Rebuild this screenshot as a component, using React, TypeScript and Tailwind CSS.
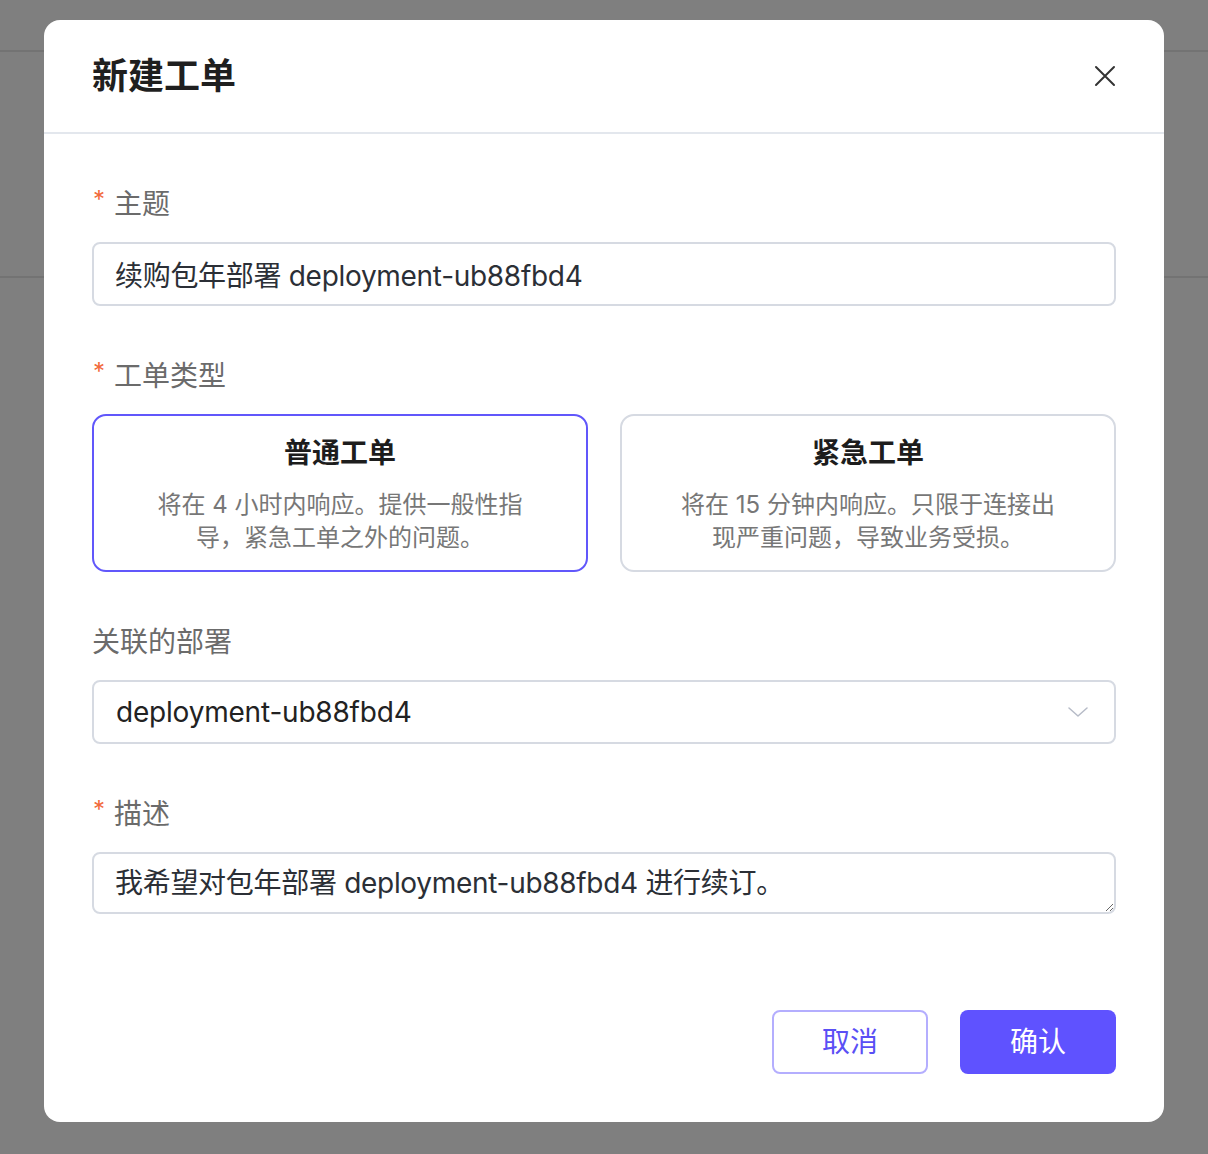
import { useState } from "react";

const font = {
  fontFamily: '"Inter", "Noto Sans CJK SC", sans-serif',
};

function Label({ text, required }: { text: string; required?: boolean }) {
  return (
    <div className="flex items-center h-10 text-[28px] leading-10 text-[#6b6b6b]">
      {required && (
        <span className="w-[22px] text-[24px] text-[#f26a3b] -mt-2 pl-[1px]">*</span>
      )}
      <span>{text}</span>
    </div>
  );
}

const ticketTypes = [
  {
    key: "normal",
    title: "普通工单",
    desc: ["将在 4 小时内响应。提供一般性指", "导，紧急工单之外的问题。"],
  },
  {
    key: "urgent",
    title: "紧急工单",
    desc: ["将在 15 分钟内响应。只限于连接出", "现严重问题，导致业务受损。"],
  },
];

export default function App() {
  const [type, setType] = useState("normal");

  return (
    <div className="relative h-[1154px] bg-[#7f7f7f] overflow-hidden" style={font}>
      <div className="h-[52px] border-b-2 border-[#737373]" />
      <div className="h-[226px] border-b-2 border-[#737373]" />

      <div className="absolute left-[44px] top-[20px] w-[1120px] h-[1102px] rounded-2xl bg-white">
        <div className="h-[114px] flex items-center justify-between px-12 border-b-2 border-[#e3e7ed]">
          <h1 className="text-[36px] font-bold text-[#1f1f1f]">新建工单</h1>
          <button className="w-[22px] h-[22px] text-[#333]">
            <svg viewBox="0 0 22 22" width="22" height="22" fill="none" stroke="currentColor" strokeWidth="2" strokeLinecap="round">
              <path d="M2 2 L20 20 M20 2 L2 20" />
            </svg>
          </button>
        </div>

        <div className="px-12 pt-[50px]">
          <Label text="主题" required />
          <input
            className="mt-[18px] w-full h-16 rounded-lg border-2 border-[#d6dae2] px-[21px] text-[28px] tracking-[-0.3px] text-[#2b2f36] outline-none"
            defaultValue="续购包年部署 deployment-ub88fbd4"
          />

          <div className="mt-[50px]">
            <Label text="工单类型" required />
          </div>
          <div className="mt-[18px] grid grid-cols-2 gap-8">
            {ticketTypes.map((t) => (
              <button
                key={t.key}
                onClick={() => setType(t.key)}
                className={
                  "h-[158px] rounded-[14px] border-2 flex flex-col items-center pt-[19px] " +
                  (type === t.key ? "border-[#6157fb]" : "border-[#d6dae2]")
                }
              >
                <div className="text-[28px] leading-9 font-bold text-[#1d1d1d]">{t.title}</div>
                <div className="mt-[17px] text-[24px] leading-[33px] text-[#777]">
                  {t.desc.map((d) => (
                    <div key={d}>{d}</div>
                  ))}
                </div>
              </button>
            ))}
          </div>

          <div className="mt-[50px]">
            <Label text="关联的部署" />
          </div>
          <div className="mt-[18px] h-16 rounded-lg border-2 border-[#d6dae2] flex items-center justify-between pl-[22px] pr-[26px]">
            <span className="text-[28px] tracking-[-0.2px] text-[#222]">deployment-ub88fbd4</span>
            <svg viewBox="0 0 20 10" width="20" height="10" fill="none" stroke="#b6bbc7" strokeWidth="1.5" strokeLinecap="round" strokeLinejoin="round">
              <path d="M1 1 L10 9 L19 1" />
            </svg>
          </div>

          <div className="mt-[50px]">
            <Label text="描述" required />
          </div>
          <textarea
            className="mt-[18px] block w-full h-[62px] rounded-lg border-2 border-[#d6dae2] px-[21px] pt-[9px] text-[28px] tracking-[-0.3px] leading-10 text-[#2b2f36] outline-none resize-y"
            defaultValue="我希望对包年部署 deployment-ub88fbd4 进行续订。"
          />

          <div className="mt-[96px] flex justify-end gap-8">
            <button className="w-[156px] h-16 rounded-lg border-2 border-[#b4aefe] text-[28px] text-[#5a4ff5] bg-white">
              取消
            </button>
            <button className="w-[156px] h-16 rounded-lg bg-[#5f52ff] text-[28px] text-white">
              确认
            </button>
          </div>
        </div>
      </div>
    </div>
  );
}
